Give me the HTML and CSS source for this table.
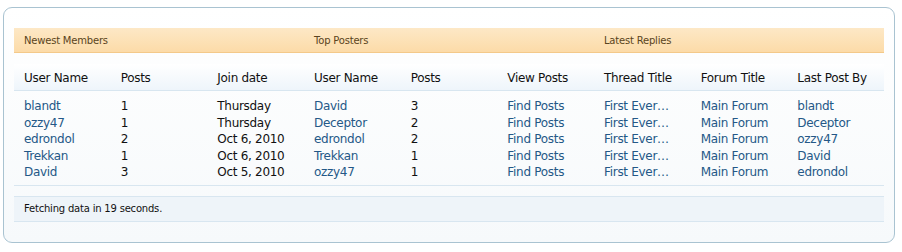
FILE: index.html
```html
<!DOCTYPE html>
<html>
<head>
<meta charset="utf-8">
<link rel="stylesheet" href="styles.css">
</head>
<body>
<div class="box">
  <div class="sections">
    <div class="sec">Newest Members</div>
    <div class="sec">Top Posters</div>
    <div class="sec">Latest Replies</div>
  </div>
  <div class="grid heads">
    <div>User Name</div><div>Posts</div><div>Join date</div>
    <div>User Name</div><div>Posts</div><div>View Posts</div>
    <div>Thread Title</div><div>Forum Title</div><div>Last Post By</div>
  </div>
  <div class="grid data">
    <a>blandt</a><span>1</span><span>Thursday</span><a>David</a><span>3</span><a>Find Posts</a><a>First Ever…</a><a>Main Forum</a><a>blandt</a>
    <a>ozzy47</a><span>1</span><span>Thursday</span><a>Deceptor</a><span>2</span><a>Find Posts</a><a>First Ever…</a><a>Main Forum</a><a>Deceptor</a>
    <a>edrondol</a><span>2</span><span>Oct 6, 2010</span><a>edrondol</a><span>2</span><a>Find Posts</a><a>First Ever…</a><a>Main Forum</a><a>ozzy47</a>
    <a>Trekkan</a><span>1</span><span>Oct 6, 2010</span><a>Trekkan</a><span>1</span><a>Find Posts</a><a>First Ever…</a><a>Main Forum</a><a>David</a>
    <a>David</a><span>3</span><span>Oct 5, 2010</span><a>ozzy47</a><span>1</span><a>Find Posts</a><a>First Ever…</a><a>Main Forum</a><a>edrondol</a>
  </div>
  <div class="foot">Fetching data in 19 seconds.</div>
</div>
</body>
</html>
```
FILE: styles.css
```css
html, body { margin: 0; padding: 0; background: #fff; }
body { font-family: "DejaVu Sans", Verdana, sans-serif; color: #222; }
.box {
  margin: 7px 0 0 3px;
  width: 870px;
  height: 214px;
  padding: 20px 10px 0 10px;
  border: 1px solid #a9c3d1;
  border-radius: 9px;
  background: linear-gradient(#fff, #f6f9fb);
}
.sections {
  display: grid;
  grid-template-columns: repeat(3, 1fr);
  height: 24px;
  background: linear-gradient(#fde8c6, #fcdba8);
  border-bottom: 1px solid #f4c98a;
}
.sec {
  font-size: 10px;
  letter-spacing: -0.2px;
  padding-top: 2px;
  line-height: 22px;
  padding-left: 10px;
  color: #5a4420;
}
.grid {
  display: grid;
  grid-template-columns: repeat(9, 1fr);
}
.grid > * { padding-left: 10px; white-space: nowrap; }
.heads {
  margin-top: 11px;
  padding-top: 3px;
  height: 23px;
  line-height: 23px;
  font-size: 12px;
  letter-spacing: -0.3px;
  color: #111;
  background: linear-gradient(#fff, #eef5fb);
  border-bottom: 1px solid #d8e6f0;
}
.data {
  padding-top: 7px;
  padding-bottom: 4px;
  font-size: 12px;
  letter-spacing: -0.3px;
  line-height: 16.5px;
  border-bottom: 1px solid #d8e6f0;
}
.data a { color: #245887; }
.data span { color: #111; }
.foot {
  margin-top: 10px;
  height: 24px;
  line-height: 24px;
  padding-left: 10px;
  font-size: 10px;
  letter-spacing: -0.2px;
  color: #111;
  background: #eef4f9;
  border-top: 1px solid #d8e6f0;
  border-bottom: 1px solid #d8e6f0;
}
```
